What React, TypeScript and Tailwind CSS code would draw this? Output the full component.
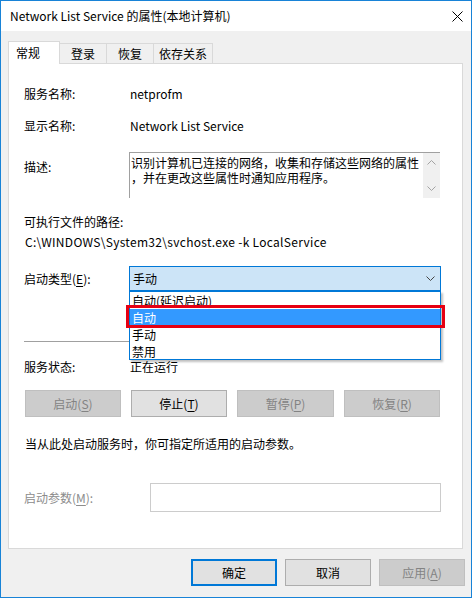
import React from 'react'

const font = { fontFamily: '"Noto Sans CJK SC", "Noto Sans", sans-serif' }

function Key({ k }: { k: string }) {
  return <u className="underline underline-offset-2 decoration-1">{k}</u>
}

function Btn({
  children,
  disabled,
  primary,
  className = '',
}: {
  children: React.ReactNode
  disabled?: boolean
  primary?: boolean
  className?: string
}) {
  const look = disabled
    ? 'bg-[#cccccc] border border-[#bfbfbf] text-[#838383]'
    : primary
      ? 'bg-[#e1e1e1] border-2 border-[#0078d7] text-black'
      : 'bg-[#e1e1e1] border border-[#adadad] text-black'
  return (
    <div className={`h-[27px] flex items-center justify-center text-[12px] ${look} ${className}`}>
      <span>{children}</span>
    </div>
  )
}

function Chevron({ up }: { up?: boolean }) {
  return (
    <svg width="9" height="5" viewBox="0 0 9 5" className="block">
      <path
        d={up ? 'M0.5 4.5 L4.5 0.5 L8.5 4.5' : 'M0.5 0.5 L4.5 4.5 L8.5 0.5'}
        fill="none"
        stroke="currentColor"
        strokeWidth="1"
      />
    </svg>
  )
}

export default function App() {
  return (
    <div
      style={font}
      className="w-[472px] h-[598px] flex flex-col border border-[#1883d7] bg-[#f0f0f0] text-[12px] text-black overflow-hidden"
    >
      {/* Title bar */}
      <div className="h-[30px] bg-white flex items-center justify-between pl-[9px] pr-[9px] shrink-0">
        <span className="text-[12px] text-black">Network List Service 的属性(本地计算机)</span>
        <svg width="11" height="11" viewBox="0 0 11 11" className="mr-[-1px]">
          <path d="M0.5 0.5 L10.5 10.5 M10.5 0.5 L0.5 10.5" stroke="#000" strokeWidth="1" fill="none" />
        </svg>
      </div>

      {/* Body */}
      <div className="flex-1 pt-[10px] pl-[7px] pr-[8px]">
        {/* Tabs */}
        <div className="relative z-10 flex items-end h-[23px]">
          <div className="h-[23px] w-[52px] bg-white border border-b-0 border-[#d9d9d9] pl-[7px] pt-[1px] leading-[20px]">
            常规
          </div>
          <div className="h-[21px] w-[47px] border border-l-0 border-[#d9d9d9] flex items-center justify-center">
            登录
          </div>
          <div className="h-[21px] w-[47px] border border-l-0 border-[#d9d9d9] flex items-center justify-center">
            恢复
          </div>
          <div className="h-[21px] w-[59px] border border-l-0 border-[#d9d9d9] flex items-center justify-center">
            依存关系
          </div>
        </div>

        {/* Panel */}
        <div className="relative -mt-px h-[486px] bg-white border border-[#d9d9d9] pl-[15px] pr-[21px] pt-[20px]">
          <div className="flex items-center h-[20px]">
            <span className="w-[106px]">服务名称:</span>
            <span>netprofm</span>
          </div>
          <div className="flex items-center h-[20px] mt-[12px]">
            <span className="w-[106px]">显示名称:</span>
            <span>Network List Service</span>
          </div>

          <div className="flex items-start h-[46px] mt-[16px]">
            <span className="w-[105px] pt-[5px] leading-[20px]">描述:</span>
            <div className="flex-1 h-[46px] flex border-t border-l border-[#a0a0a0] mr-[1px]">
              <div className="flex-1 pl-[1px] pt-[2px] leading-[15px] whitespace-nowrap">
                识别计算机已连接的网络，收集和存储这些网络的属性
                <br />
                ，并在更改这些属性时通知应用程序。
              </div>
              <div className="w-[17px] bg-[#f0f0f0] flex flex-col items-center justify-between pt-[7px] pb-[7px] text-[#a3a3a3]">
                <Chevron up />
                <Chevron />
              </div>
            </div>
          </div>

          <div className="h-[20px] flex items-center mt-[14px]">可执行文件的路径:</div>
          <div className="h-[20px] flex items-center pl-[1px] tracking-[0.3px]">
            C:\WINDOWS\System32\svchost.exe -k LocalService
          </div>

          <div className="flex items-center h-[25px] mt-[14px]">
            <span className="w-[105px]">
              启动类型(<Key k="E" />):
            </span>
            <div className="flex-1 h-[25px] bg-[#cce4f7] border border-[#0078d7] flex items-center justify-between pl-[3px] pr-[5px]">
              <span>手动</span>
              <span className="text-[#444]">
                <Chevron />
              </span>
            </div>
          </div>

          <div className="h-px bg-[#a0a0a0] mt-[50px]" />

          <div className="flex items-center h-[20px] mt-[15px]">
            <span className="w-[106px]">服务状态:</span>
            <span>正在运行</span>
          </div>

          <div className="flex justify-between mt-[13px] pl-[1px] pr-[1px]">
            <Btn disabled className="w-[96px]">
              启动(<Key k="S" />)
            </Btn>
            <Btn className="w-[96px]">
              停止(<Key k="T" />)
            </Btn>
            <Btn disabled className="w-[97px]">
              暂停(<Key k="P" />)
            </Btn>
            <Btn disabled className="w-[96px]">
              恢复(<Key k="R" />)
            </Btn>
          </div>

          <div className="h-[20px] flex items-center mt-[17px] pl-[1px]">
            当从此处启动服务时，你可指定所适用的启动参数。
          </div>

          <div className="flex items-center h-[29px] mt-[29px]">
            <span className="w-[126px] text-[#8c8c8c]">
              启动参数(<Key k="M" />):
            </span>
            <div className="flex-1 h-[29px] bg-white border border-[#cccccc]" />
          </div>

          {/* Open dropdown list */}
          <div className="absolute left-[120px] top-[227px] w-[312px] h-[69px] bg-white border border-[#0078d7] shadow-[2px_2px_2px_rgba(0,0,0,0.25)]">
            <div className="h-[17px] leading-[17px] pl-[2px]">自动(延迟启动)</div>
            <div className="h-[17px] leading-[17px] pl-[2px] bg-[#3399ff] text-white">自动</div>
            <div className="h-[17px] leading-[17px] pl-[2px]">手动</div>
            <div className="h-[17px] leading-[17px] pl-[2px]">禁用</div>
          </div>
          <div className="absolute left-[117px] top-[241px] w-[319px] h-[23px] border-[3px] border-[#e60012]" />
        </div>

        {/* Dialog buttons */}
        <div className="flex justify-end gap-[8px] mt-[10px] mr-[-2px]">
          <Btn primary className="w-[86px]">确定</Btn>
          <Btn className="w-[86px]">取消</Btn>
          <Btn disabled className="w-[86px]">
            应用(<Key k="A" />)
          </Btn>
        </div>
      </div>
    </div>
  )
}
